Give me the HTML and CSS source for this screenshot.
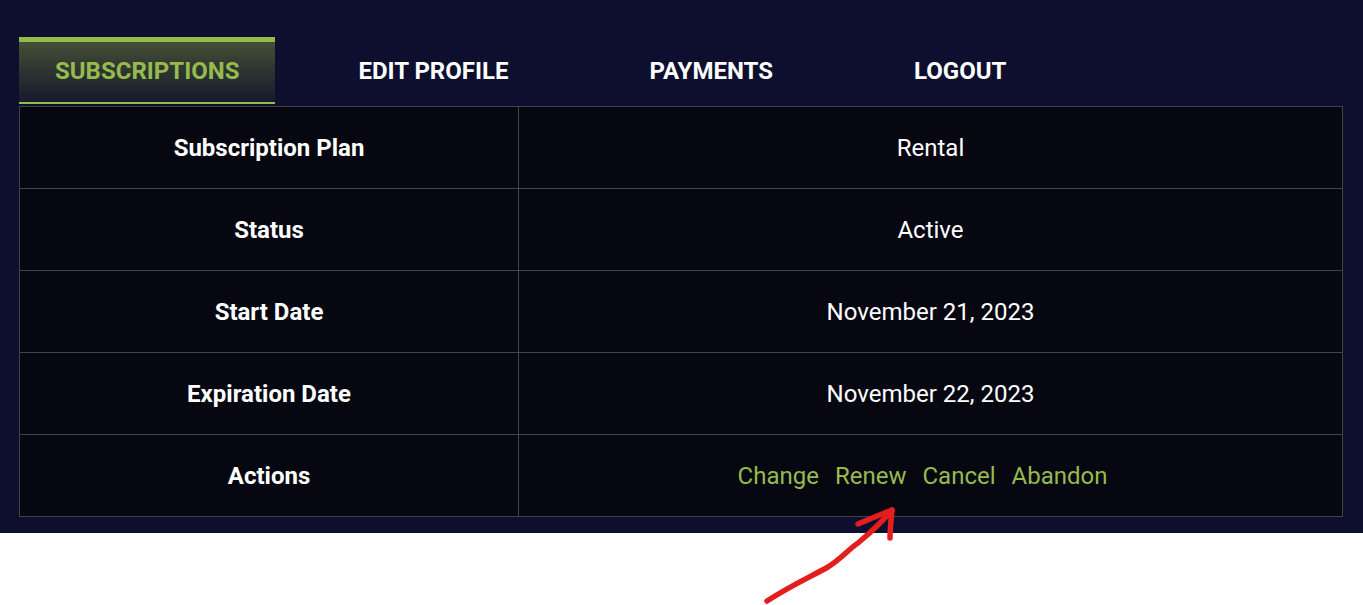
FILE: index.html
```html
<!DOCTYPE html>
<html>
<head>
<meta charset="utf-8">
<link rel="stylesheet" href="styles.css">
</head>
<body>
<div class="panel">
  <nav class="tabs">
    <a class="tab active">SUBSCRIPTIONS</a>
    <a class="tab">EDIT PROFILE</a>
    <a class="tab">PAYMENTS</a>
    <a class="tab">LOGOUT</a>
  </nav>
  <table class="subs">
    <tr><th>Subscription Plan</th><td>Rental</td></tr>
    <tr><th>Status</th><td>Active</td></tr>
    <tr><th>Start Date</th><td>November 21, 2023</td></tr>
    <tr><th>Expiration Date</th><td>November 22, 2023</td></tr>
    <tr><th>Actions</th><td class="actions"><a>Change</a><a>Renew</a><a>Cancel</a><a>Abandon</a></td></tr>
  </table>
</div>
<svg class="arrow" width="1363" height="605" viewBox="0 0 1363 605">
  <path d="M767 601 C790 586 812 576 828 567 C842 558 850 548 858 543 C870 533 882 522 892 510" fill="none" stroke="#e41e1e" stroke-width="5.5" stroke-linecap="round"/>
  <path d="M858 524 C870 519 882 514 892 510 C891 520 890 530 890 538" fill="none" stroke="#e41e1e" stroke-width="5.5" stroke-linecap="round" stroke-linejoin="round"/>
</svg>
</body>
</html>
```
FILE: styles.css
```css
html, body {
  margin: 0;
  padding: 0;
  background: #ffffff;
  font-family: Roboto, "Liberation Sans", sans-serif;
}
.panel {
  background: #0e0f2e;
  padding: 37px 20px 16px 19px;
}
.tabs {
  display: flex;
  gap: 25px;
  height: 67px;
  margin-bottom: 2px;
}
.tab {
  display: flex;
  align-items: center;
  padding: 0 58px 3px;
  font-size: 24px;
  font-weight: 700;
  color: #ffffff;
  box-sizing: border-box;
  border-top: 5px solid transparent;
  border-bottom: 2px solid transparent;
}
.tab.active {
  padding: 0 36px 3px;
  color: #95bb4c;
  border-top-color: #95bb4c;
  border-bottom-color: #95bb4c;
  background: linear-gradient(to bottom, #454f37 0%, #2c3331 50%, #171a2c 100%);
}
.subs {
  width: 100%;
  border-collapse: collapse;
  background: #070712;
  table-layout: fixed;
}
.subs th, .subs td {
  border: 1px solid #444446;
  height: 81px;
  padding: 0;
  text-align: center;
  color: #ffffff;
  font-size: 24px;
}
.subs th {
  width: 498px;
  font-weight: 700;
}
.subs td {
  font-weight: 400;
}
.actions a {
  color: #95bb4c;
  margin: 0 16px 0 0;
}
.arrow {
  position: absolute;
  left: 0;
  top: 0;
  pointer-events: none;
}
```
